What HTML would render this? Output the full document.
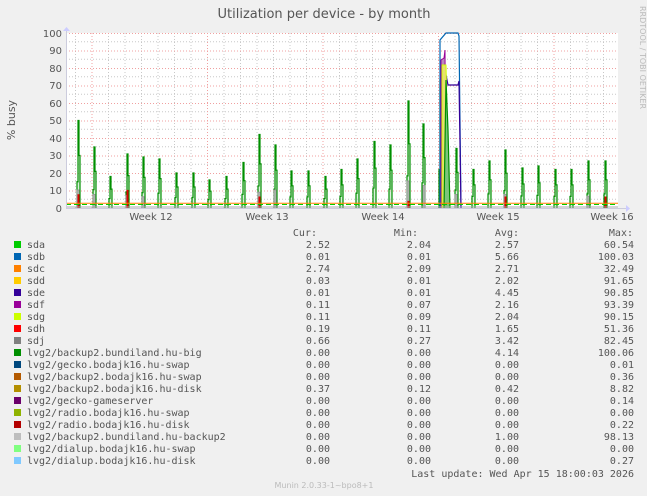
<!DOCTYPE html>
<html><head><meta charset="utf-8"><style>
html,body{margin:0;padding:0;background:#f0f0f0;}
svg{display:block;font-family:"DejaVu Sans","Liberation Sans",sans-serif;}
.m{font-family:"DejaVu Sans Mono","Liberation Mono",monospace;font-size:10px;fill:#555;}
</style></head><body>
<svg width="647" height="496" viewBox="0 0 647 496" xmlns="http://www.w3.org/2000/svg">
<defs>
<path id="sp" d="M-3,0 V-0.3 H-2 V-1 H-1 V-0.6 H0 V0" fill="#b8e0b8" fill-opacity="0.5" stroke="#008f00" stroke-width="1.2" vector-effect="non-scaling-stroke"/>
<path id="sg" d="M-2,0 V-0.45 H0 V0" fill="#aaa" fill-opacity="0.6" stroke="#999" stroke-width="1" vector-effect="non-scaling-stroke"/>
<path id="sr" d="M-2,0 V-0.22 H-1 V0" fill="#e06060" stroke="#d00" stroke-width="1" vector-effect="non-scaling-stroke"/>
</defs>
<text x="324" y="18" font-size="13" fill="#555" text-anchor="middle">Utilization per device - by month</text>
<text transform="translate(640,6) rotate(90)" font-size="8" fill="#bbb">RRDTOOL / TOBI OETIKER</text>
<text transform="translate(15,120) rotate(-90)" font-size="11" fill="#555" text-anchor="middle">% busy</text>
<rect x="66" y="33" width="552" height="175" fill="#fff"/>
<g stroke="#c8c8c8" stroke-dasharray="1,2" stroke-width="1">
<path d="M66,41.75H618M66,59.25H618M66,76.75H618M66,94.25H618M66,111.75H618M66,129.25H618M66,146.75H618M66,164.25H618M66,181.75H618M66,199.25H618"/>
<path d="M75.5,33V208M108.5,33V208M125,33V208M141.5,33V208M158,33V208M174.5,33V208M191,33V208M224,33V208M240.5,33V208M257,33V208M273.5,33V208M290,33V208M306.5,33V208M339.5,33V208M356,33V208M372.5,33V208M389,33V208M405.5,33V208M422,33V208M455,33V208M471.5,33V208M488,33V208M504.5,33V208M521,33V208M537.5,33V208M570.5,33V208M587,33V208M603.5,33V208"/>
</g>
<g stroke="#f0a0a0" stroke-dasharray="1,2" stroke-width="1">
<path d="M66,33.5H618M66,51H618M66,68.5H618M66,86H618M66,103.5H618M66,121H618M66,138.5H618M66,156H618M66,173.5H618M66,191H618"/>
<path d="M92,33V208M207.5,33V208M323,33V208M438.5,33V208M554,33V208"/>
</g>
<g font-size="10" fill="#555" text-anchor="end">
<text x="62" y="37">100</text><text x="62" y="54">90</text><text x="62" y="72">80</text><text x="62" y="89">70</text><text x="62" y="107">60</text><text x="62" y="124">50</text><text x="62" y="142">40</text><text x="62" y="159">30</text><text x="62" y="177">20</text><text x="62" y="194">10</text><text x="62" y="212">0</text>
</g>
<g font-size="10" fill="#555" text-anchor="middle">
<text x="151" y="220">Week 12</text><text x="267" y="220">Week 13</text><text x="383" y="220">Week 14</text><text x="498" y="220">Week 15</text><text x="612" y="220">Week 16</text>
</g>
<g>
<use href="#sp" transform="translate(80,208) scale(1,87.5)"/><use href="#sp" transform="translate(96,208) scale(1,61)"/><use href="#sp" transform="translate(112,208) scale(1,31.5)"/><use href="#sp" transform="translate(129,208) scale(1,54)"/><use href="#sp" transform="translate(145,208) scale(1,51)"/><use href="#sp" transform="translate(161,208) scale(1,49)"/><use href="#sp" transform="translate(178,208) scale(1,35)"/><use href="#sp" transform="translate(195,208) scale(1,35)"/><use href="#sp" transform="translate(211,208) scale(1,28)"/><use href="#sp" transform="translate(228,208) scale(1,31.5)"/><use href="#sp" transform="translate(245,208) scale(1,45.5)"/><use href="#sp" transform="translate(261,208) scale(1,73.5)"/><use href="#sp" transform="translate(277,208) scale(1,63)"/><use href="#sp" transform="translate(293,208) scale(1,37)"/><use href="#sp" transform="translate(310,208) scale(1,37)"/><use href="#sp" transform="translate(327,208) scale(1,31.5)"/><use href="#sp" transform="translate(343,208) scale(1,38.5)"/><use href="#sp" transform="translate(359,208) scale(1,49)"/><use href="#sp" transform="translate(376,208) scale(1,66.5)"/><use href="#sp" transform="translate(392,208) scale(1,63)"/><use href="#sp" transform="translate(410,208) scale(1,107)"/><use href="#sp" transform="translate(425,208) scale(1,84)"/><use href="#sp" transform="translate(442,208) scale(1,128)"/><use href="#sp" transform="translate(458,208) scale(1,59.5)"/><use href="#sp" transform="translate(475,208) scale(1,38.5)"/><use href="#sp" transform="translate(491,208) scale(1,47)"/><use href="#sp" transform="translate(507,208) scale(1,58)"/><use href="#sp" transform="translate(524,208) scale(1,40)"/><use href="#sp" transform="translate(540,208) scale(1,42)"/><use href="#sp" transform="translate(557,208) scale(1,38.5)"/><use href="#sp" transform="translate(573,208) scale(1,38.5)"/><use href="#sp" transform="translate(590,208) scale(1,47)"/><use href="#sp" transform="translate(607,208) scale(1,47)"/>
</g>
<g>
<use href="#sg" transform="translate(79,208) scale(1,40)"/><use href="#sg" transform="translate(95,208) scale(1,30)"/><use href="#sg" transform="translate(128,208) scale(1,28)"/><use href="#sg" transform="translate(144,208) scale(1,25)"/><use href="#sg" transform="translate(260,208) scale(1,35)"/><use href="#sg" transform="translate(276,208) scale(1,40)"/><use href="#sg" transform="translate(409,208) scale(1,60)"/><use href="#sg" transform="translate(425,208) scale(1,50)"/><use href="#sg" transform="translate(457,208) scale(1,30)"/><use href="#sg" transform="translate(506,208) scale(1,30)"/><use href="#sg" transform="translate(589,208) scale(1,26)"/>
<use href="#sr" transform="translate(80,208) scale(1,60)"/><use href="#sr" transform="translate(129,208) scale(1,80)"/><use href="#sr" transform="translate(261,208) scale(1,50)"/><use href="#sr" transform="translate(410,208) scale(1,30)"/><use href="#sr" transform="translate(507,208) scale(1,50)"/><use href="#sr" transform="translate(607,208) scale(1,50)"/>
</g>
<path d="M440,208 V40 L446,33 H458 L459,36 L461,208" fill="none" stroke="#0066b3" stroke-width="1.2"/>
<path d="M443,208 V60 L448,85 H458 L459,81 L461,208" fill="none" stroke="#330099" stroke-width="1.2"/>
<path d="M441,208 V60 L444,58 L445,50 L446,208" fill="#bb88bb" stroke="#990099" stroke-width="1"/>
<path d="M442,208 V65 H446 L449,208" fill="#e8e070" stroke="#ccff00" stroke-width="1"/>
<path d="M444,208 L446,80 L448,130 L450,208" fill="#7cc47c" stroke="#008f00" stroke-width="1.2"/>
<path d="M66,203.3H618" stroke="#ff8000" stroke-width="1"/>
<path d="M66,204.5H618" stroke="#00cc00" stroke-width="1" stroke-dasharray="5,3"/>
<path d="M66,207H618" stroke="#aaa" stroke-width="1"/>
<path d="M66,208.5H626" stroke="#ccd" stroke-width="1"/><path d="M626,205L630,208.5L626,212Z" fill="#ccf"/>
<path d="M66.5,30V208" stroke="#ccd" stroke-width="1"/><path d="M63,31L66.5,27L70,31Z" fill="#ccf"/>
<g class="m">
<text x="317" y="236" text-anchor="end">Cur:</text><text x="418" y="236" text-anchor="end">Min:</text><text x="519" y="236" text-anchor="end">Avg:</text><text x="633" y="236" text-anchor="end">Max:</text>
</g>
<g>
<rect x="14" y="241" width="7" height="7" fill="#00cc00"/><rect x="14" y="253" width="7" height="7" fill="#0066b3"/><rect x="14" y="265" width="7" height="7" fill="#ff8000"/><rect x="14" y="277" width="7" height="7" fill="#ffcc00"/><rect x="14" y="289" width="7" height="7" fill="#330099"/><rect x="14" y="301" width="7" height="7" fill="#990099"/><rect x="14" y="313" width="7" height="7" fill="#ccff00"/><rect x="14" y="325" width="7" height="7" fill="#ff0000"/><rect x="14" y="337" width="7" height="7" fill="#808080"/><rect x="14" y="349" width="7" height="7" fill="#008f00"/><rect x="14" y="361" width="7" height="7" fill="#00487d"/><rect x="14" y="373" width="7" height="7" fill="#b35a00"/><rect x="14" y="385" width="7" height="7" fill="#b38f00"/><rect x="14" y="397" width="7" height="7" fill="#6b006b"/><rect x="14" y="409" width="7" height="7" fill="#8fb300"/><rect x="14" y="421" width="7" height="7" fill="#b30000"/><rect x="14" y="433" width="7" height="7" fill="#bebebe"/><rect x="14" y="445" width="7" height="7" fill="#80ff80"/><rect x="14" y="457" width="7" height="7" fill="#80c9ff"/>
</g>
<g class="m">
<text x="27" y="248">sda</text><text x="27" y="260">sdb</text><text x="27" y="272">sdc</text><text x="27" y="284">sdd</text><text x="27" y="296">sde</text><text x="27" y="308">sdf</text><text x="27" y="320">sdg</text><text x="27" y="332">sdh</text><text x="27" y="344">sdj</text><text x="27" y="356">lvg2/backup2.bundiland.hu-big</text><text x="27" y="368">lvg2/gecko.bodajk16.hu-swap</text><text x="27" y="380">lvg2/backup2.bodajk16.hu-swap</text><text x="27" y="392">lvg2/backup2.bodajk16.hu-disk</text><text x="27" y="404">lvg2/gecko-gameserver</text><text x="27" y="416">lvg2/radio.bodajk16.hu-swap</text><text x="27" y="428">lvg2/radio.bodajk16.hu-disk</text><text x="27" y="440">lvg2/backup2.bundiland.hu-backup2</text><text x="27" y="452">lvg2/dialup.bodajk16.hu-swap</text><text x="27" y="464">lvg2/dialup.bodajk16.hu-disk</text>
</g>
<g class="m" text-anchor="end">
<text x="330" y="248">2.52</text><text x="330" y="260">0.01</text><text x="330" y="272">2.74</text><text x="330" y="284">0.03</text><text x="330" y="296">0.01</text><text x="330" y="308">0.11</text><text x="330" y="320">0.11</text><text x="330" y="332">0.19</text><text x="330" y="344">0.66</text><text x="330" y="356">0.00</text><text x="330" y="368">0.00</text><text x="330" y="380">0.00</text><text x="330" y="392">0.37</text><text x="330" y="404">0.00</text><text x="330" y="416">0.00</text><text x="330" y="428">0.00</text><text x="330" y="440">0.00</text><text x="330" y="452">0.00</text><text x="330" y="464">0.00</text>
</g>
<g class="m" text-anchor="end">
<text x="431" y="248">2.04</text><text x="431" y="260">0.01</text><text x="431" y="272">2.09</text><text x="431" y="284">0.01</text><text x="431" y="296">0.01</text><text x="431" y="308">0.07</text><text x="431" y="320">0.09</text><text x="431" y="332">0.11</text><text x="431" y="344">0.27</text><text x="431" y="356">0.00</text><text x="431" y="368">0.00</text><text x="431" y="380">0.00</text><text x="431" y="392">0.12</text><text x="431" y="404">0.00</text><text x="431" y="416">0.00</text><text x="431" y="428">0.00</text><text x="431" y="440">0.00</text><text x="431" y="452">0.00</text><text x="431" y="464">0.00</text>
</g>
<g class="m" text-anchor="end">
<text x="519" y="248">2.57</text><text x="519" y="260">5.66</text><text x="519" y="272">2.71</text><text x="519" y="284">2.02</text><text x="519" y="296">4.45</text><text x="519" y="308">2.16</text><text x="519" y="320">2.04</text><text x="519" y="332">1.65</text><text x="519" y="344">3.42</text><text x="519" y="356">4.14</text><text x="519" y="368">0.00</text><text x="519" y="380">0.00</text><text x="519" y="392">0.42</text><text x="519" y="404">0.00</text><text x="519" y="416">0.00</text><text x="519" y="428">0.00</text><text x="519" y="440">1.00</text><text x="519" y="452">0.00</text><text x="519" y="464">0.00</text>
</g>
<g class="m" text-anchor="end">
<text x="634" y="248">60.54</text><text x="634" y="260">100.03</text><text x="634" y="272">32.49</text><text x="634" y="284">91.65</text><text x="634" y="296">90.85</text><text x="634" y="308">93.39</text><text x="634" y="320">90.15</text><text x="634" y="332">51.36</text><text x="634" y="344">82.45</text><text x="634" y="356">100.06</text><text x="634" y="368">0.01</text><text x="634" y="380">0.36</text><text x="634" y="392">8.82</text><text x="634" y="404">0.14</text><text x="634" y="416">0.00</text><text x="634" y="428">0.22</text><text x="634" y="440">98.13</text><text x="634" y="452">0.00</text><text x="634" y="464">0.27</text>
</g>
<text class="m" x="634" y="477" text-anchor="end">Last update: Wed Apr 15 18:00:03 2026</text>
<text x="324" y="488" font-size="8" fill="#bbb" text-anchor="middle">Munin 2.0.33-1~bpo8+1</text>
</svg>
</body></html>
